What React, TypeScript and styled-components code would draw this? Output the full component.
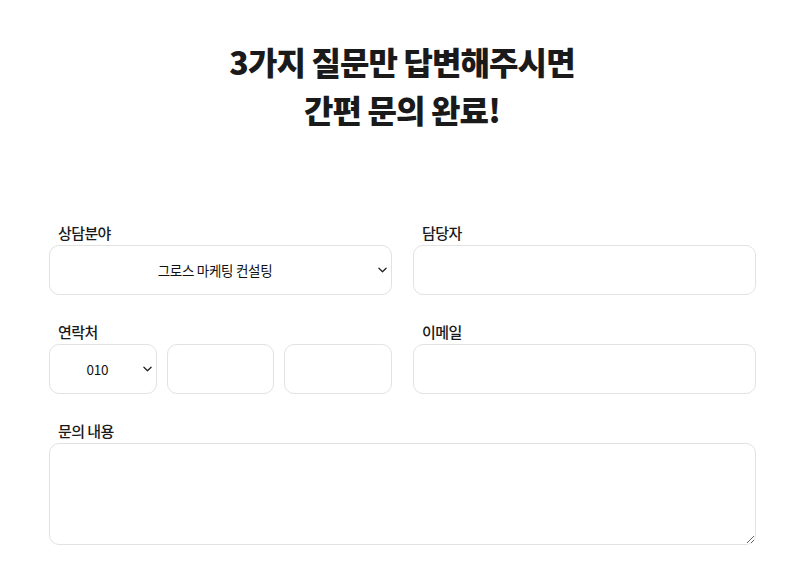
import React from "react";
import styled, { createGlobalStyle } from "styled-components";

const Global = createGlobalStyle`
  html, body { margin: 0; padding: 0; background: #ffffff; }
  body { font-family: "Noto Sans CJK KR", "Noto Sans", sans-serif; color: #222; }
  * { box-sizing: border-box; }
`;

const Page = styled.div`
  padding-top: 37px;
`;

const Title = styled.h1`
  margin: 0;
  text-align: center;
  font-size: 32px;
  line-height: 48px;
  font-weight: 800;
  letter-spacing: -0.9px;
  color: #1a1a1a;
  padding-left: 4px;
`;

const Form = styled.form`
  margin: 90px 0 0 49px;
  width: 707px;
  display: grid;
  grid-template-columns: 1fr 1fr;
  column-gap: 21px;
  row-gap: 27px;
`;

const Field = styled.div<{ $wide?: boolean }>`
  display: flex;
  flex-direction: column;
  grid-column: ${(p) => (p.$wide ? "1 / span 2" : "auto")};
`;

const Label = styled.label`
  font-size: 15px;
  line-height: 20px;
  letter-spacing: -0.6px;
  font-weight: 500;
  color: #1a1a1a;
  padding-left: 9px;
  margin-bottom: 2px;
`;

const boxStyles = `
  height: 50px;
  border: 1px solid #e2e2e2;
  border-radius: 10px;
  background-color: #ffffff;
  font-family: "Noto Sans CJK KR", "Noto Sans", sans-serif;
  color: #111;
  outline: none;
`;

const chevron =
  "url(\"data:image/svg+xml;utf8,<svg xmlns='http://www.w3.org/2000/svg' width='10' height='6' viewBox='0 0 10 6'><path d='M1 1l4 4 4-4' fill='none' stroke='%23222' stroke-width='1.4' stroke-linecap='round' stroke-linejoin='round'/></svg>\")";

const Select = styled.select`
  ${boxStyles}
  appearance: none;
  -webkit-appearance: none;
  width: 100%;
  font-size: 13.5px;
  font-weight: 400;
  letter-spacing: -0.3px;
  text-align: center;
  text-align-last: center;
  padding: 0 19px 0 8px;
  background-image: ${chevron};
  background-repeat: no-repeat;
  background-size: 9px 6px;
  background-position: right 4px center;
`;

const Input = styled.input`
  ${boxStyles}
  width: 100%;
  padding: 0 12px;
  font-size: 14px;
`;

const PhoneRow = styled.div`
  display: grid;
  grid-template-columns: 1fr 1fr 1fr;
  column-gap: 10px;
`;

const TextArea = styled.textarea`
  ${boxStyles}
  height: 102px;
  width: 100%;
  padding: 12px;
  font-size: 14px;
  resize: vertical;
`;

export default function App() {
  return (
    <Page>
      <Global />
      <Title>
        3가지 질문만 답변해주시면
        <br />
        간편 문의 완료!
      </Title>
      <Form onSubmit={(e) => e.preventDefault()}>
        <Field>
          <Label>상담분야</Label>
          <Select defaultValue="growth">
            <option value="growth">그로스 마케팅 컨설팅</option>
            <option value="perf">퍼포먼스 마케팅</option>
          </Select>
        </Field>
        <Field>
          <Label>담당자</Label>
          <Input type="text" />
        </Field>
        <Field>
          <Label>연락처</Label>
          <PhoneRow>
            <Select defaultValue="010">
              <option value="010">010</option>
              <option value="011">011</option>
            </Select>
            <Input type="text" />
            <Input type="text" />
          </PhoneRow>
        </Field>
        <Field>
          <Label>이메일</Label>
          <Input type="email" />
        </Field>
        <Field $wide>
          <Label>문의 내용</Label>
          <TextArea />
        </Field>
      </Form>
    </Page>
  );
}
